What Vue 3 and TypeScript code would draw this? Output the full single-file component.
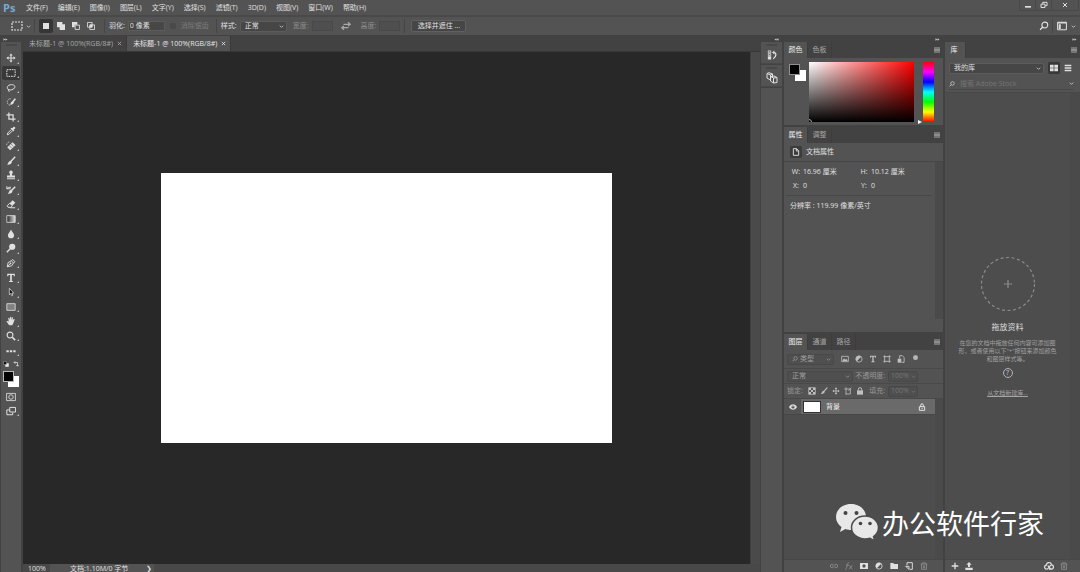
<script setup lang="ts">
import { ref } from 'vue'

const menus: string[] = ['文件(F)', '编辑(E)', '图像(I)', '图层(L)', '文字(Y)', '选择(S)', '滤镜(T)', '3D(D)', '视图(V)', '窗口(W)', '帮助(H)']

const docs = ['未标题-1 @ 100%(RGB/8#)', '未标题-1 @ 100%(RGB/8#)']
const activeDoc = ref(1)

const s = 'fill="none" stroke="currentColor"'
const icons: Record<string, string> = {
  move: `<path ${s} stroke-width="1.300" d="M6 2v8M2 6h8"/><path fill="currentColor" d="M6 .5L8 3H4zM6 11.500L8 9H4zM.5 6L3 4v4zM11.500 6L9 4v4z"/>`,
  marquee: `<path ${s} stroke-width="1.200" stroke-dasharray="2 1" d="M1 2h10v8H1z"/>`,
  lasso: `<path ${s} stroke-width="1.200" d="M3.500 8C.5 7 1 3 5 2.200s6.500 1 5.300 3.500S5.500 8.800 3.500 8zm0 0c-1.200-.7-1.500.8-.5.900s1.200 1 .3 2"/>`,
  quick: `<path ${s} stroke-dasharray="1.500 1" d="M5.500 2a4 4 0 1 0 0 8"/><path ${s} stroke-width="2" d="M11.300 2L8 6"/><path fill="currentColor" d="M8.500 5c1.500 1 .8 2.700-.3 3.500S5 9.500 4.500 8.500c1.700-.5 1-3.500 4-3.500z"/>`,
  crop: `<path ${s} stroke-width="1.500" d="M3.500 .5v8H11.500M.5 3.500h8v8"/>`,
  dropper: `<path ${s} stroke-width="1.200" d="M6.500 4L2.200 8.300 1.500 10.500l2.200-.7L8 5.500"/><path fill="currentColor" d="M5.500 3l1-1 1.300.8 1-1.600c1.200-1.200 3.200.5 2 2L9.200 4.300l.8 1.200-1 1z"/>`,
  heal: `<path fill="currentColor" d="M8 1.500l3.500 3.500L5 11 1.500 7.500z"/><path ${s} stroke-dasharray="1.200 .8" d="M1 5a3 3 0 0 1 4-3.500"/><path fill="none" stroke="#535353" stroke-width=".7" d="M6 3.500l3.300 3.300M3.800 5.500l3.300 3.300"/>`,
  brush: `<path ${s} stroke-width="1.700" d="M11 1L5.500 7"/><path fill="currentColor" d="M5.500 5.700l1.500 1.600c0 2.200-2.600 3.700-6 3.200 2-.8 1.500-4.500 4.500-4.800z"/>`,
  stamp: `<path fill="currentColor" d="M6 .7c1.500 0 2.500 1.200 2 2.600L7.200 5.500V6.700h3.600V9H1.200V6.700h3.600V5.500L4 3.300C3.500 1.900 4.500.7 6 .7zM1.200 10h9.600v1.200H1.200z"/>`,
  history: `<path ${s} stroke-width="1.200" d="M1 4.500h4.500M1 1.500v3C2.500 3 4 2.500 6 2.700"/><path ${s} stroke-width="1.800" d="M11 2L6.300 7"/><path fill="currentColor" d="M6.300 5.700l1.500 1.600c-.4 2.500-2.500 3.700-5.800 3.200 2-1 1.300-4.500 4.300-4.800z"/>`,
  eraser: `<path ${s} stroke-width="1.200" d="M1.500 8l3-3 3 3-2 2h-3zM5 10.500h6"/><path fill="currentColor" d="M4.500 5L8 1.500l3.200 3L7.500 8z"/>`,
  gradient: `<defs><linearGradient id="toolGrad"><stop stop-color="#222"/><stop offset="1" stop-color="#ddd"/></linearGradient></defs><path fill="url(#toolGrad)" stroke="currentColor" d="M1 2h10v8H1z"/>`,
  blur: `<path fill="currentColor" d="M6 .5c.8 2.700 3.700 4.200 3.700 7a3.700 3.700 0 0 1-7.400 0C2.300 4.700 5.200 3.200 6 .5z"/>`,
  dodge: `<circle cx="7.500" cy="4.500" r="3.700" fill="currentColor"/><path ${s} stroke-width="1.600" d="M5 7l-4 4"/>`,
  pen: `<path ${s} stroke-width="1.100" d="M1.500 10.500l1-5L6.500 3.300 9 6 6.700 9.500zM1.500 10.500L5 7M6.500 3.300L8 1.700l2.800 2.800L9 6"/><circle cx="5.500" cy="6.500" r="1" fill="currentColor"/>`,
  type: `<path fill="currentColor" d="M1.500 1h9v3H9.300L9 2.500H7V9.500l1.500.3v1h-5v-1L5 9.500V2.500H3L2.700 4H1.500z"/>`,
  arrow: `<path fill="#111" stroke="currentColor" stroke-width=".9" d="M4 1.500v7.700l1.700-1.500 1.200 2.800 1.300-.6-1.200-2.600h2.300z"/>`,
  rect: `<path fill="#808080" stroke="currentColor" d="M1 2h10v8H1z"/>`,
  hand: `<path fill="currentColor" d="M3.300 6.500L2.700 2.600c.5-.8 1.400-.4 1.500.1l.6 2L4.900 1.300c.5-.8 1.400-.5 1.400.1V4.800l.8-2.900c.6-.6 1.400-.2 1.300.5l-.4 2.900 1.200-1.600c.7-.5 1.400 0 1.100.8L8.600 9c-.5 1.500-1.300 2.200-2.900 2.200-1.800 0-2.600-.7-3.400-2.200L.6 6.700c-.1-1 1.100-1 1.600-.4z"/>`,
  zoom: `<circle cx="4.800" cy="4.800" r="3.500" ${s} stroke-width="1.300"/><path ${s} stroke-width="2" d="M7.500 7.500L11 11"/>`,
  search: `<circle cx="7" cy="4.800" r="3.500" ${s} stroke-width="1.300"/><path ${s} stroke-width="1.600" d="M4.500 7.300L1.300 10.500"/>`,
  dots: `<path fill="currentColor" d="M.5 5h2.800v2.500H.5zM4.600 5h2.800v2.500H4.600zM8.700 5h2.800v2.500H8.700z"/>`,
  chevron: `<path ${s} stroke-width="1.800" d="M2 4l4 4 4-4"/>`,
  newsel: `<path fill="currentColor" d="M1.500 1.500h9v9h-9z"/>`,
  addsel: `<path fill="currentColor" d="M0 0h8v3.500h4V12H4V8H0z"/>`,
  subsel: `<path fill="currentColor" d="M0 0h8v4H4v4H0z"/><path ${s} stroke-width="1.300" d="M4.700 4.700h6.500v6.500H4.700z"/>`,
  intsel: `<path ${s} stroke-width="1.300" d="M.7 .7h7v7h-7zM4.300 4.300h7v7h-7z"/><path fill="currentColor" d="M4 4h4v4H4z"/>`,
  swap: `<path ${s} stroke-width="1.500" d="M1 8h8M3 4h8M8.500 1.500L11 4 8.500 6M3.500 6L1 8l2.500 2.500"/>`,
  workspace: `<path ${s} stroke-width="1.200" d="M.7 1.500h10.600v9H.7z"/><path fill="currentColor" d="M.7 1.500h10.600V3H.7zM2 4h2.500v5.500H2z"/>`,
  min: `<path fill="currentColor" d="M1.500 7.500h9v2.500h-9z"/>`,
  restore: `<path ${s} stroke-width="1.500" d="M4 4V2h6.500v5H8M1.500 4.700h6v5h-6z"/>`,
  close: `<path ${s} stroke-width="2" d="M2 2l8 8M10 2l-8 8"/>`,
  left: `<path fill="currentColor" d="M6 3v6L1 6zM11 3v6L6 6z"/>`,
  right: `<path fill="currentColor" d="M1 3v6l5-3zM6 3v6l5-3z"/>`,
  menu: `<path fill="currentColor" d="M0 1h12v2H0zM0 4h12v1.500H0zM0 6.500h12v1.500H0zM0 9h12v2H0z"/>`,
  histPanel: `<path ${s} stroke-width="1" d="M1.500 1h3v2.500h-3zM1.500 4.500h3v2h-3z"/><path fill="currentColor" d="M1 7.500h4V11.500H1zM6 3l3-2.500v5z"/><path ${s} stroke-width="1.500" d="M8.500 3c3 .5 3 4.500-1 7.500"/>`,
  cubes: `<path ${s} stroke-width="1" d="M1 1.500l3.500 1.500V8L1 6zM1 1.500l2-.8L6.500 2 4.500 3M6.500 2v3M4.500 4.500L7.500 6v5L4.500 9zM7.500 6l3.500-.5v5L7.500 11M4.500 4.500L8 4l3 1.500"/>`,
  doc: `<path ${s} stroke-width="1.400" d="M2 1h5l3 3v7H2zM6.500 1v3.500H10"/>`,
  grid: `<path fill="currentColor" d="M0 1h5.500v4.500H0zM6.500 1H12v4.500H6.500zM0 6.500h5.500V11H0zM6.500 6.500H12V11H6.500z"/>`,
  list: `<path fill="currentColor" d="M1 1h10v2H1zM1 4h10v1.500H1zM1 6.500h10V8H1zM1 9h10v2H1z"/>`,
  image: `<path ${s} stroke-width="1.200" d="M1 2h10v8H1z"/><path fill="currentColor" d="M2 9l2.500-4 1.800 2L8 5.500 10 9z"/>`,
  adjust: `<circle cx="6" cy="6" r="4.700" ${s} stroke-width="1.200"/><path fill="currentColor" d="M9.300 2.700L2.700 9.300a4.700 4.700 0 0 1 0-6.600 4.700 4.700 0 0 1 6.600 0z"/>`,
  shape: `<path ${s} stroke-width="1.300" d="M2.500 .5v11M9.500 .5v11M.5 2.500h11M.5 9.500h11"/>`,
  smart: `<path ${s} stroke-width="1.300" d="M4 5V1h4L10.700 4v7H7"/><path fill="currentColor" d="M1 5.500h5.500V11.500H1z"/>`,
  pixels: `<path ${s} stroke-width="1.200" d="M1 1h10v10H1z"/><path fill="currentColor" d="M1.500 1.500h3v3h-3zM7.500 1.500h3v3h-3zM4.500 4.500h3v3h-3zM1.500 7.500h3v3h-3zM7.500 7.500h3v3h-3z"/>`,
  artboard: `<path ${s} stroke-width="1.200" d="M3 .5v11M.5 3h9v7.500H3M7 5.500l4-4.500"/>`,
  lock: `<path fill="currentColor" d="M1.500 5h9v6.500h-9z"/><path ${s} stroke-width="1.500" d="M3.500 5V3.500a2.500 2.500 0 0 1 5 0V5"/>`,
  lockLine: `<path ${s} stroke-width="1.400" d="M2 5.500h8v5.500H2zM4 5.500V3.300a2 2 0 0 1 4 0v2.200M6 7.200v2"/>`,
  eye: `<path fill="currentColor" d="M0 6c3-5.500 9-5.500 12 0-3 5.500-9 5.500-12 0z"/><circle cx="6" cy="6" r="2.300" fill="#444"/><circle cx="6" cy="5.500" r=".9" fill="currentColor"/>`,
  link: `<path ${s} stroke-width="1.300" d="M5 3.500H3a2.500 2.500 0 0 0 0 5h2M7 3.500h2a2.500 2.500 0 0 1 0 5H7M3.500 6h5"/>`,
  fx: `<path ${s} stroke-width="1.300" d="M0 11.300c2 .5 2.300-2 3-5.300S4.500 .5 6.500 1M1.500 4.500h4.500M6.500 5l4.500 6M11 5l-5 6"/>`,
  mask: `<path fill="currentColor" fill-rule="evenodd" d="M0 1.500h12v9H0zM6 3.500a2.500 2.500 0 1 0 0 5 2.500 2.500 0 0 0 0-5z"/>`,
  folder: `<path fill="currentColor" d="M.5 1.500h4.500l1 1.500h6v7.500H.5z"/>`,
  page: `<path ${s} stroke-width="1.400" d="M3 5V1h8v10H7M1 6.500h5V11z"/>`,
  trash: `<path ${s} stroke-width="1.300" d="M1 3h10M4 3V1.200h4V3M2.200 3v8h7.600V3M5 5v4.500M7 5v4.500"/>`,
  plus: `<path ${s} stroke-width="2" d="M6 1v10M1 6h10"/>`,
  upload: `<path fill="currentColor" d="M6 0l4 4H7.500v3.500h-3V4H2zM.5 8.500h11V12H.5z"/>`,
  cloud: `<path ${s} stroke-width="1.500" d="M3.200 9.800C0 9.800-.2 5.500 2.800 5 3 1.200 8 .8 9 4M3.200 9.800c3 0 3-5.300 6-5.300 2.800 0 2.800 5.300 0 5.300C7 9.800 6 7 4.500 5.500M6 9.800h3"/>`,
  quickmask: `<path ${s} d="M.7 1.700h10.600v8.600H.7z"/><circle cx="6" cy="6" r="2.700" ${s}/>`,
  screen: `<path ${s} stroke-width="1.200" d="M4.500 1.700h7v5.500h-7zM4 4.700H1v5.800h7V8"/>`,
  swapColors: `<path ${s} stroke-width="1.500" d="M2 3h7v7M4.500 .5L2 3l2.500 2.500M6.500 8L9 10.500 11.500 8"/>`,
  defaults: `<path fill="#eee" d="M4.500 4.500H11.500V11.500H4.500z"/><path fill="#111" stroke="#aaa" d="M1 1h6v6H1z"/>`,
}

interface Tool { icon: string; label: string }
const tools: Tool[] = [
  { icon: 'move', label: '移动工具' }, { icon: 'marquee', label: '矩形选框工具' }, { icon: 'lasso', label: '套索工具' },
  { icon: 'quick', label: '快速选择工具' }, { icon: 'crop', label: '裁剪工具' }, { icon: 'dropper', label: '吸管工具' },
  { icon: 'heal', label: '污点修复画笔工具' }, { icon: 'brush', label: '画笔工具' }, { icon: 'stamp', label: '仿制图章工具' },
  { icon: 'history', label: '历史记录画笔工具' }, { icon: 'eraser', label: '橡皮擦工具' }, { icon: 'gradient', label: '渐变工具' },
  { icon: 'blur', label: '模糊工具' }, { icon: 'dodge', label: '减淡工具' }, { icon: 'pen', label: '钢笔工具' },
  { icon: 'type', label: '横排文字工具' }, { icon: 'arrow', label: '路径选择工具' }, { icon: 'rect', label: '矩形工具' },
  { icon: 'hand', label: '抓手工具' }, { icon: 'zoom', label: '缩放工具' }, { icon: 'dots', label: '编辑工具栏' },
]
const activeTool = ref('marquee')

const selModes: Tool[] = [
  { icon: 'newsel', label: '新选区' }, { icon: 'addsel', label: '添加到选区' },
  { icon: 'subsel', label: '从选区减去' }, { icon: 'intsel', label: '与选区交叉' },
]
const activeMode = ref('newsel')
const feather = ref('0 像素')

const filters: Tool[] = [
  { icon: 'image', label: '像素图层' }, { icon: 'adjust', label: '调整图层' }, { icon: 'type', label: '文字图层' },
  { icon: 'shape', label: '形状图层' }, { icon: 'smart', label: '智能对象' },
]
const locks: Tool[] = [
  { icon: 'pixels', label: '锁定透明像素' }, { icon: 'brush', label: '锁定图像像素' }, { icon: 'move', label: '锁定位置' },
  { icon: 'artboard', label: '防止自动嵌套' }, { icon: 'lock', label: '锁定全部' },
]
const layerActions = [
  { icon: 'link', label: '链接图层', off: true }, { icon: 'fx', label: '图层样式', off: true }, { icon: 'mask', label: '添加蒙版', off: false },
  { icon: 'adjust', label: '新建调整图层', off: false }, { icon: 'folder', label: '新建组', off: false },
  { icon: 'page', label: '新建图层', off: false }, { icon: 'trash', label: '删除图层', off: true },
]
</script>

<template>
  <div class="app">
    <header class="menubar">
      <span class="logo">Ps</span>
      <nav class="menus">
        <button v-for="m in menus" :key="m">{{ m }}</button>
      </nav>
      <div class="window">
        <button aria-label="最小化"><svg viewBox="0 0 12 12" class="i8" v-html="icons.min" /></button>
        <button aria-label="还原"><svg viewBox="0 0 12 12" class="i8" v-html="icons.restore" /></button>
        <button class="wide" aria-label="关闭"><svg viewBox="0 0 12 12" class="i6" v-html="icons.close" /></button>
      </div>
    </header>

    <div class="options">
      <button class="preset" aria-label="工具预设">
        <svg viewBox="0 0 12 12" class="i12" v-html="icons.marquee" />
        <svg viewBox="0 0 12 12" class="i5" v-html="icons.chevron" />
      </button>
      <i class="sep" />
      <div class="modes">
        <button v-for="m in selModes" :key="m.icon" :class="{ on: activeMode === m.icon }" :aria-label="m.label" @click="activeMode = m.icon">
          <svg viewBox="0 0 12 12" class="i8" v-html="icons[m.icon]" />
        </button>
      </div>
      <i class="sep" />
      <label class="field">羽化: <input v-model="feather" class="w36" type="text"></label>
      <label class="field check dim"><input type="checkbox" disabled>消除锯齿</label>
      <i class="sep" />
      <label class="field">样式:
        <span class="drop w46"><select><option>正常</option></select><svg viewBox="0 0 12 12" class="i5" v-html="icons.chevron" /></span>
      </label>
      <label class="field dim">宽度: <input class="w22" type="text" disabled></label>
      <button class="swap dim" aria-label="高度和宽度互换"><svg viewBox="0 0 12 12" class="i10" v-html="icons.swap" /></button>
      <label class="field dim">高度: <input class="w22" type="text" disabled></label>
      <i class="sep tight" />
      <button class="mask-btn">选择并遮住 ...</button>
      <div class="options-end">
        <button aria-label="搜索"><svg viewBox="0 0 12 12" class="i10" v-html="icons.search" /></button>
        <i class="sep" />
        <button class="preset" aria-label="工作区"><svg viewBox="0 0 12 12" class="i10" v-html="icons.workspace" /><svg viewBox="0 0 12 12" class="i5" v-html="icons.chevron" /></button>
      </div>
    </div>

    <div class="workspace">
      <aside class="toolbar">
        <button class="collapse start" aria-label="展开工具栏"><svg viewBox="0 0 12 12" class="i5" v-html="icons.right" /></button>
        <div class="tools">
          <i class="grip" />
          <div class="tool-list">
            <button v-for="t in tools" :key="t.icon" :class="{ on: activeTool === t.icon }" :aria-label="t.label" @click="activeTool = t.icon">
              <svg viewBox="0 0 12 12" class="i10" v-html="icons[t.icon]" />
            </button>
          </div>
          <div class="mini">
            <button aria-label="默认颜色"><svg viewBox="0 0 12 12" class="i6" v-html="icons.defaults" /></button>
            <button aria-label="切换颜色"><svg viewBox="0 0 12 12" class="i6" v-html="icons.swapColors" /></button>
          </div>
          <div class="swatches"><button class="bg" aria-label="背景色" /><button class="fg" aria-label="前景色" /></div>
          <button class="mode-btn" aria-label="快速蒙版"><svg viewBox="0 0 12 12" class="i10" v-html="icons.quickmask" /></button>
          <button class="mode-btn more" aria-label="屏幕模式"><svg viewBox="0 0 12 12" class="i10" v-html="icons.screen" /></button>
        </div>
      </aside>

      <main class="document">
        <div class="doc-tabs">
          <div v-for="(d, i) in docs" :key="i" class="doc-tab" :class="{ on: activeDoc === i }">
            <button @click="activeDoc = i">{{ d }}</button>
            <button aria-label="关闭文档"><svg viewBox="0 0 12 12" class="i5" v-html="icons.close" /></button>
          </div>
        </div>
        <div class="doc-view">
          <div class="stage"><div class="artboard" /></div>
          <div class="vscroll" />
        </div>
        <footer class="status">
          <span class="percent">100%</span>
          <span class="info"><span>文档:1.10M/0 字节</span><button>❯</button></span>
        </footer>
      </main>

      <aside class="dock">
        <button class="collapse" aria-label="展开面板"><svg viewBox="0 0 12 12" class="i5" v-html="icons.left" /></button>
        <div class="dock-item"><i class="grip" /><button aria-label="历史记录"><svg viewBox="0 0 12 12" class="i10" v-html="icons.histPanel" /></button></div>
        <div class="dock-item"><i class="grip" /><button aria-label="3D"><svg viewBox="0 0 12 12" class="i12" v-html="icons.cubes" /></button></div>
        <div class="dock-rest" />
      </aside>

      <aside class="panels">
        <button class="collapse" aria-label="折叠面板"><svg viewBox="0 0 12 12" class="i5" v-html="icons.right" /></button>
        <section class="panel">
          <div class="tabs"><button class="on">颜色</button><button>色板</button><button class="menu" aria-label="面板菜单"><svg viewBox="0 0 12 12" class="i6" v-html="icons.menu" /></button></div>
          <div class="color-body">
            <div class="swatches"><button class="bg" aria-label="背景色" /><button class="fg" aria-label="前景色" /></div>
            <div class="spectrum"><i class="cursor" /></div>
            <div class="hue"><i class="pointer" /></div>
          </div>
        </section>

        <section class="panel props">
          <div class="tabs"><button class="on">属性</button><button>调整</button><button class="menu" aria-label="面板菜单"><svg viewBox="0 0 12 12" class="i6" v-html="icons.menu" /></button></div>
          <div class="props-title"><span class="doc-icon"><svg viewBox="0 0 12 12" class="i8" v-html="icons.doc" /></span>文档属性</div>
          <div class="props-body">
            <div class="props-main">
              <dl class="dims">
                <div><dt>W:</dt><dd>16.96 厘米</dd></div>
                <div><dt>H:</dt><dd>10.12 厘米</dd></div>
                <div><dt>X:</dt><dd>0</dd></div>
                <div><dt>Y:</dt><dd>0</dd></div>
              </dl>
              <p class="resolution">分辨率 : 119.99 像素/英寸</p>
            </div>
            <div class="gutter" />
          </div>
        </section>

        <section class="panel layers">
          <div class="tabs"><button class="on">图层</button><button>通道</button><button>路径</button><button class="menu" aria-label="面板菜单"><svg viewBox="0 0 12 12" class="i6" v-html="icons.menu" /></button></div>
          <div class="row filter">
            <span class="drop kind"><svg viewBox="0 0 12 12" class="i6" v-html="icons.search" /><select aria-label="图层类型"><option>类型</option></select><svg viewBox="0 0 12 12" class="i5" v-html="icons.chevron" /></span>
            <div class="filter-icons">
              <button v-for="f in filters" :key="f.icon" :aria-label="f.label"><svg viewBox="0 0 12 12" class="i8" v-html="icons[f.icon]" /></button>
            </div>
            <button class="toggle" aria-label="图层过滤开关" />
          </div>
          <div class="row off">
            <span class="drop blend"><select aria-label="混合模式" disabled><option>正常</option></select><svg viewBox="0 0 12 12" class="i5" v-html="icons.chevron" /></span>
            <label class="field">不透明度: <span class="drop pct"><input type="text" value="100%" disabled><svg viewBox="0 0 12 12" class="i5" v-html="icons.chevron" /></span></label>
          </div>
          <div class="row off">
            <span>锁定:</span>
            <div class="lock-icons">
              <button v-for="l in locks" :key="l.icon" :aria-label="l.label"><svg viewBox="0 0 12 12" class="i8" v-html="icons[l.icon]" /></button>
            </div>
            <label class="field">填充: <span class="drop pct"><input type="text" value="100%" disabled><svg viewBox="0 0 12 12" class="i5" v-html="icons.chevron" /></span></label>
          </div>
          <div class="layer-area">
            <div class="layer-list">
              <div class="layer">
                <button class="eye" aria-label="可见性"><svg viewBox="0 0 12 12" class="i8" v-html="icons.eye" /></button>
                <div class="layer-main"><span class="thumb" /><span class="name">背景</span><svg viewBox="0 0 12 12" class="i8" v-html="icons.lockLine" /></div>
              </div>
            </div>
            <div class="gutter" />
          </div>
          <footer class="actions">
            <button v-for="a in layerActions" :key="a.icon" :class="{ faint: a.off }" :aria-label="a.label"><svg viewBox="0 0 12 12" class="i8" v-html="icons[a.icon]" /></button>
          </footer>
        </section>
      </aside>

      <aside class="library">
        <button class="collapse" aria-label="折叠库"><svg viewBox="0 0 12 12" class="i5" v-html="icons.right" /></button>
        <div class="tabs"><button class="on">库</button><button class="menu" aria-label="面板菜单"><svg viewBox="0 0 12 12" class="i6" v-html="icons.menu" /></button></div>
        <div class="lib-head">
          <div class="lib-pick">
            <span class="drop"><select aria-label="库"><option>我的库</option></select><svg viewBox="0 0 12 12" class="i5" v-html="icons.chevron" /></span>
            <button class="view on" aria-label="网格视图"><svg viewBox="0 0 12 12" class="i8" v-html="icons.grid" /></button>
            <button class="view" aria-label="列表视图"><svg viewBox="0 0 12 12" class="i8" v-html="icons.list" /></button>
          </div>
          <label class="lib-search">
            <svg viewBox="0 0 12 12" class="i6" v-html="icons.search" />
            <input type="text" placeholder="搜索 Adobe Stock" aria-label="搜索 Adobe Stock">
            <svg viewBox="0 0 12 12" class="i5" v-html="icons.chevron" />
          </label>
        </div>
        <div class="lib-body">
          <div class="lib-empty">
            <svg viewBox="0 0 56 56" class="target"><circle cx="28" cy="28" r="26.500" fill="none" stroke="#8c8c8c" stroke-width="1.200" stroke-dasharray="3 2.550" /><path d="M24 28h8M28 24v8" stroke="#8c8c8c" stroke-width="1.200" /></svg>
            <h2>拖放资料</h2>
            <p>在您的文档中拖放任何内容可添加图<br>形，或者使用以下"+"按钮来添加颜色<br>和图层样式等。</p>
            <button class="help" aria-label="帮助">?</button>
            <a href="#">从文档新建库...</a>
          </div>
          <div class="gutter" />
        </div>
        <footer class="actions lib-actions">
          <button aria-label="添加内容"><svg viewBox="0 0 12 12" class="i8" v-html="icons.plus" /></button>
          <button aria-label="上传"><svg viewBox="0 0 12 12" class="i8" v-html="icons.upload" /></button>
          <button class="push" aria-label="Creative Cloud"><svg viewBox="0 0 12 12" class="i10" v-html="icons.cloud" /></button>
          <button class="faint" aria-label="删除"><svg viewBox="0 0 12 12" class="i8" v-html="icons.trash" /></button>
        </footer>
      </aside>
    </div>

    <div class="watermark">
      <svg viewBox="0 0 44 40" class="chat">
        <path fill="#e8e8e8" d="M16 1C7 1 1 7 1 14c0 4 2 7.500 5.500 10L5 29l5.500-3c2 .7 4 1 6.500 1 8 0 14-6 14-13S25 1 16 1z" />
        <path fill="#e8e8e8" stroke="#4d4d4d" stroke-width="1.500" d="M30 13c-7.500 0-13.500 5-13.500 11.500S22.500 36 30 36c2 0 3.500-.3 5-.8l4.700 2.600-1.200-4.300c3-2 5-5.300 5-9C43.500 18 37.500 13 30 13z" />
        <circle cx="10.500" cy="10" r="2" fill="#444" /><circle cx="21.500" cy="10" r="2" fill="#444" />
        <circle cx="25.500" cy="20.500" r="1.800" fill="#444" /><circle cx="35" cy="20.500" r="1.800" fill="#444" />
      </svg>
      <span>办公软件行家</span>
    </div>
  </div>
</template>

<style>
html, body { margin: 0; background: #424242; }
</style>

<style scoped>
.app { position: relative; display: flex; flex-direction: column; height: 100vh; overflow: hidden; background: #424242; color: #e0e0e0; font: 7px/10px "Open Sans", "Noto Sans CJK SC", sans-serif; white-space: nowrap; }
.app * { box-sizing: border-box; }
button, input, select { margin: 0; padding: 0; border: 0; border-radius: 0; background: none; color: inherit; font: inherit; appearance: none; outline: 0; min-width: 0; }
button { display: flex; align-items: center; justify-content: center; }
select { flex: 1; opacity: 1; }
svg { display: block; flex: none; }
.i5 { width: 5px; height: 5px; }
.i6 { width: 6px; height: 6px; }
.i8 { width: 8px; height: 8px; }
.i10 { width: 10px; height: 10px; }
.i12 { width: 12px; height: 12px; }

.menubar { display: flex; align-items: center; height: 15px; flex: none; background: #535353; }
.logo { width: 22px; padding-left: 3px; color: #78a9d6; font: bold 11px/14px "Open Sans", sans-serif; }
.menus { display: flex; gap: 10px; padding-left: 4px; }
.window { display: flex; align-self: flex-start; margin: 0 1px 0 auto; border: 1px solid #484848; border-top: 0; border-radius: 0 0 2px 2px; }
.window button { width: 16px; height: 10px; border-right: 1px solid #484848; }
.window .wide { width: 26px; border: 0; }

.options { display: flex; align-items: center; height: 21px; flex: none; padding: 0 4px 0 11px; background: #535353; border-top: 2px solid #494949; border-bottom: 1px solid #424242; }
.preset { gap: 3px; }
.sep { width: 1px; height: 14px; margin: 0 4px 0 3px; background: #464646; }
.sep.tight { margin: 0 6px 0 4px; }
.modes { display: flex; gap: 1px; margin-right: 3px; }
.modes button { width: 14px; height: 14px; }
.modes .on { background: #363636; border-radius: 2px; }
.field { display: flex; align-items: center; gap: 3px; }
.field input[type="text"] { height: 10px; padding: 0 1px; background: #474747; border: 1px solid #5c5c5c; }
.dim { color: #8c8c8c; }
.dim input[type="text"] { background: #4f4f4f; border-color: #494949; }
.w36.w36 { width: 37px; }
.w22.w22 { width: 21px; }
.check { margin: 0 4px 0 5px; gap: 5px; color: #7a7a7a; }
.check input { width: 6px; height: 6px; background: #4a4a4a; border-radius: 1px; }
.drop { display: flex; align-items: center; padding: 0 2px 0 4px; height: 11px; background: #464646; border: 1px solid #5c5c5c; border-radius: 2px; }
.w46 { width: 47px; margin-right: 6px; }
.swap { margin: 0 10px 0 8px; color: #a8a8a8; }
.mask-btn { width: 55px; height: 12px; background: #464646; border: 1px solid #606060; border-radius: 2px; }
.options-end { display: flex; align-items: center; margin-left: auto; }
.options-end .preset { gap: 4px; }

.workspace { display: flex; flex: 1; min-height: 0; }
.collapse { width: 100%; height: 6px; flex: none; justify-content: flex-end; padding: 0 3px; color: #c0c0c0; }
.collapse.start { justify-content: flex-start; }
.grip { display: block; width: 11px; height: 2px; margin: 2px auto; background: #484848; flex: none; }
.toolbar { display: flex; flex-direction: column; width: 23px; flex: none; }
.tools { display: flex; flex-direction: column; flex: 1; width: 20px; margin-left: 1px; align-items: center; background: #535353; }
.tool-list { display: grid; grid-template-rows: repeat(21, 1fr); width: 18px; height: 307px; margin-top: 3px; flex: none; }
.tool-list button, .mode-btn { position: relative; }
.tool-list button::after, .more::after { content: ""; position: absolute; right: 1px; bottom: 2px; border: 1px solid transparent; border-right-color: #bbb; border-bottom-color: #bbb; }
.tool-list .on { background: #383838; border-radius: 2px; }
.mini { display: flex; gap: 4px; padding: 3px 0 4px; }
.swatches { position: relative; width: 16px; height: 16px; flex: none; }
.swatches button { position: absolute; width: 11px; height: 11px; }
.swatches .fg { left: 0; top: 0; background: #000; border: 1px solid #b8b8b8; }
.swatches .bg { right: 0; bottom: 0; background: #fff; }
.mode-btn { width: 18px; height: 14px; margin-top: 3px; flex: none; }
.mode-btn.more { margin-top: 0; }

.document { display: flex; flex-direction: column; flex: 1; min-width: 0; }
.doc-tabs { display: flex; height: 16px; flex: none; border-bottom: 1px solid #383838; }
.doc-tab { display: flex; align-items: center; gap: 4px; padding: 0 4px 0 6px; color: #a8a8a8; border-right: 1px solid #3a3a3a; }
.doc-tab.on { background: #535353; color: #e6e6e6; }
.doc-view { display: flex; flex: 1; min-height: 0; }
.stage { display: flex; flex: 1; align-items: center; justify-content: center; background: #282828; }
.artboard { width: 62%; aspect-ratio: 450 / 269; background: #fff; }
.vscroll { width: 10px; background: #4a4a4a; border-left: 1px solid #3f3f3f; }
.status { display: flex; height: 8px; flex: none; background: #484848; line-height: 9px; }
.percent { width: 27px; padding-left: 5px; }
.info { display: flex; justify-content: space-between; width: 104px; padding: 0 2px 0 20px; background: #535353; }

.dock { display: flex; flex-direction: column; width: 24px; flex: none; padding: 0 2px 0 1px; }
.dock-item { height: 22px; margin-bottom: 1px; background: #535353; border-bottom: 1px solid #484848; }
.dock-item button { width: 100%; height: 14px; }
.dock-rest { flex: 1; background: #535353; }

.panels { display: flex; flex-direction: column; width: 161px; flex: none; padding-right: 2px; }
.panel { background: #535353; margin-bottom: 2px; }
.tabs { display: flex; height: 16px; flex: none; background: #424242; }
.tabs button { width: 24px; color: #a6a6a6; border-right: 1px solid #3d3d3d; }
.tabs .on { background: #535353; color: #f0f0f0; }
.tabs .menu { width: 12px; margin-left: auto; border: 0; }
.color-body { display: flex; height: 67px; padding: 4px 9px 3px 5px; }
.color-body .swatches { width: 17px; height: 17px; margin: 2px 3px 0 0; }
.color-body .fg { border: 1px solid #909090; }
.spectrum { position: relative; flex: 1; background: linear-gradient(to top, #000, transparent), linear-gradient(to right, #fff, #f00); overflow: hidden; }
.cursor { position: absolute; left: -3px; bottom: -3px; width: 6px; height: 6px; border: 1px solid #aaa; border-radius: 50%; }
.hue { position: relative; width: 11px; margin-left: 9px; background: linear-gradient(#f00, #f0f, #00f, #0ff, #0f0, #ff0, #f00); }
.pointer { position: absolute; left: -5px; bottom: -2px; border: 2px solid transparent; border-left: 4px solid #fff; border-right: 0; }
.props { display: flex; flex-direction: column; height: 205px; flex: none; }
.props-title { display: flex; align-items: center; gap: 4px; height: 19px; flex: none; padding-left: 6px; border-bottom: 1px solid #464646; }
.doc-icon { display: flex; align-items: center; justify-content: center; width: 12px; height: 12px; background: #3c3c3c; border-radius: 2px; }
.props-body { display: flex; height: 157px; }
.props-main { flex: 1; padding: 4px 3px 0 2px; }
.gutter { width: 8px; flex: none; background: #4a4a4a; }
.dims { display: grid; grid-template-columns: 68px 1fr; row-gap: 4px; margin: 0; padding: 1px 0 4px 5px; border-bottom: 1px solid #484848; }
.dims div { display: flex; gap: 2px; }
.dims dt { width: 10px; text-align: center; }
.dims dd { margin: 0; }
.resolution { margin: 5px 0 0 4px; }

.layers { display: flex; flex-direction: column; flex: 1; margin: 0; min-height: 0; }
.row { display: flex; align-items: center; height: 15px; flex: none; padding: 0 25px 0 3px; border-bottom: 1px solid #494949; }
.filter { height: 19px; }
.row .drop { background: #4f4f4f; border-color: #484848; color: #a0a0a0; }
.kind { width: 48px; gap: 2px; }
.filter-icons { display: flex; gap: 6px; margin-left: 7px; color: #c0c0c0; }
.toggle { width: 5px; height: 5px; margin: 0 0 4px 8px; background: #b5b5b5; border-radius: 50%; }
.off { color: #989898; justify-content: space-between; }
.blend { width: 66px; }
.row .pct { width: 30px; padding: 0 1px; color: #767676; }
.row .pct input { width: 22px; height: 9px; padding: 0 1px; background: none; border: 0; }
.lock-icons { display: flex; gap: 4px; color: #c0c0c0; }
.layer-area { display: flex; flex: 1; background: #4d4d4d; }
.layer-list { flex: 1; }
.layer { display: flex; height: 16px; background: #535353; border-bottom: 1px solid #464646; }
.eye { width: 17px; }
.layer-main { display: flex; align-items: center; flex: 1; padding: 0 9px 0 2px; background: #6a6a6a; color: #eee; }
.thumb { width: 18px; height: 12px; background: #fff; border: 1px solid #333; }
.name { flex: 1; padding-left: 5px; }
.actions { display: flex; align-items: center; gap: 7px; height: 13px; flex: none; padding: 0 15px 0 0; background: #535353; border-top: 1px solid #484848; justify-content: flex-end; }
.faint { color: #8c8c8c; }

.library { display: flex; flex-direction: column; width: 135px; flex: none; }
.library .tabs .on { width: 21px; padding-right: 2px; }
.lib-head { display: flex; flex-direction: column; gap: 4px; height: 35px; flex: none; padding: 4px 6px 0 4px; background: #535353; border-bottom: 1px solid #484848; }
.lib-pick { display: flex; align-items: center; gap: 2px; }
.lib-pick .drop { flex: 1; margin-right: 2px; }
.view { width: 12px; height: 12px; border-radius: 2px; }
.view.on { background: #383838; }
.lib-search { display: flex; align-items: center; gap: 5px; height: 12px; border-bottom: 1px solid #484848; }
.lib-search input { flex: 1; }
.lib-search input::placeholder { color: #747474; opacity: 1; }
.lib-body { display: flex; flex: 1; min-height: 0; background: #4d4d4d; }
.lib-body .gutter { width: 10px; }
.lib-empty { display: flex; flex: 1; flex-direction: column; align-items: center; justify-content: center; color: #a0a0a0; font-size: 6px; line-height: 8px; text-align: center; }
.target { width: 56px; height: 56px; }
h2 { margin: 9px 0 6px; color: #dcdcdc; font: 8px/12px "Noto Sans CJK SC", sans-serif; }
p { margin: 0; }
.help { width: 10px; height: 10px; margin: 5px 0 11px; border: 1px solid #b4b4b4; border-radius: 50%; color: #c8c8c8; font-size: 7px; line-height: 8px; }
a { color: #a6a6a6; text-decoration: underline; }
.lib-actions { gap: 6px; padding: 0 12px 0 6px; justify-content: flex-start; }
.push { margin-left: auto; }

.watermark { position: absolute; right: 36px; bottom: 29px; display: flex; align-items: center; gap: 3px; color: #fff; font: 27px/40px "Noto Sans CJK SC", sans-serif; pointer-events: none; }
.chat { width: 44px; height: 40px; }
</style>
